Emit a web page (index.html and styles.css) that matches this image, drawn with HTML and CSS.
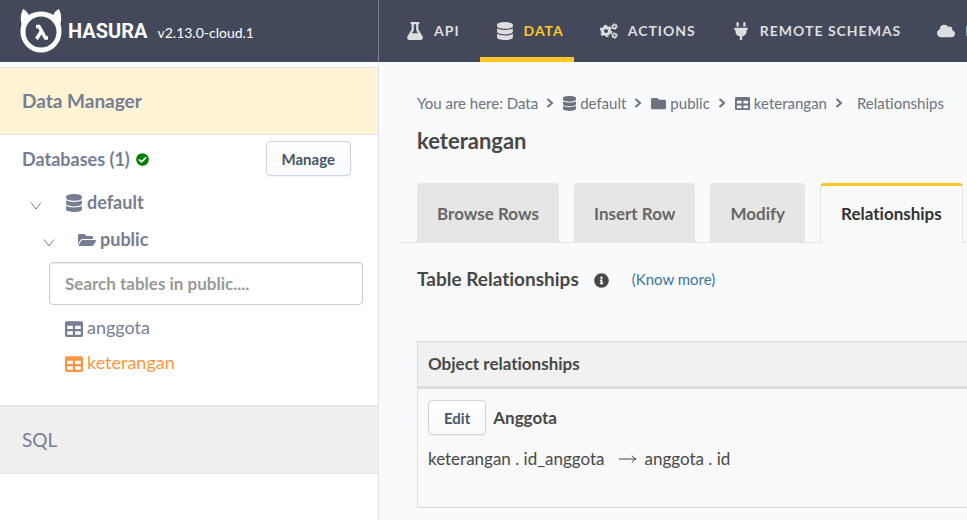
FILE: index.html
```html
<!DOCTYPE html>
<html lang="en">
<head>
<meta charset="utf-8">
<meta name="viewport" content="width=device-width, initial-scale=1">
<title>keterangan - Relationships | Hasura</title>
<link rel="stylesheet" href="styles.css">
</head>
<body>
<svg class="sprite" aria-hidden="true">
  <symbol id="database" viewBox="0 0 448 512"><path d="M448 73.143v45.714C448 159.143 347.667 192 224 192S0 159.143 0 118.857V73.143C0 32.857 100.333 0 224 0s224 32.857 224 73.143zM448 176v102.857C448 319.143 347.667 352 224 352S0 319.143 0 278.857V176c48.125 33.143 136.208 48.572 224 48.572S399.874 209.143 448 176zm0 160v102.857C448 479.143 347.667 512 224 512S0 479.143 0 438.857V336c48.125 33.143 136.208 48.572 224 48.572S399.874 369.143 448 336z"/></symbol>
  <symbol id="table" viewBox="0 0 512 512"><path d="M464 32H48C21.49 32 0 53.49 0 80v352c0 26.51 21.49 48 48 48h416c26.51 0 48-21.49 48-48V80c0-26.51-21.49-48-48-48zM224 416H64v-96h160v96zm0-160H64v-96h160v96zm224 160H288v-96h160v96zm0-160H288v-96h160v96z"/></symbol>
  <symbol id="folder" viewBox="0 0 512 512"><path d="M464 128H272l-64-64H48C21.49 64 0 85.49 0 112v288c0 26.51 21.49 48 48 48h416c26.51 0 48-21.49 48-48V176c0-26.51-21.49-48-48-48z"/></symbol>
  <symbol id="folder-open" viewBox="0 0 576 512"><path d="M572.694 292.093L500.27 416.248A63.997 63.997 0 0 1 444.989 448H45.025c-18.523 0-30.064-20.093-20.731-36.093l72.424-124.155A64 64 0 0 1 152 256h399.964c18.523 0 30.064 20.093 20.73 36.093zM152 224h328v-48c0-26.51-21.49-48-48-48H272l-64-64H48C21.49 64 0 85.49 0 112v278.046l69.077-118.418C86.214 242.25 117.989 224 152 224z"/></symbol>
  <symbol id="chevron" viewBox="0 0 8 10"><path d="M1.500 1L6 5L1.500 9" fill="none" stroke="currentColor" stroke-width="2"/></symbol>
  <symbol id="caret" viewBox="0 0 12 8"><path d="M1 .5L6 7L11 .5" fill="none" stroke="currentColor" stroke-width="1"/></symbol>
</svg>

<header class="topbar">
  <div class="brand">
    <svg class="brand-mark" viewBox="0 0 42 44" role="img" aria-label="Hasura mark">
      <path fill="#fff" fill-rule="evenodd" d="M3 0C6 1.500 8 3.500 8.500 6Q14 2.500 21 2.500T33.500 6C34 3.500 36 1.500 39 0Q42.500 7 40.500 15Q41.500 18 41.500 23A20.500 20.500 0 0 1 .5 23Q.5 18 1.500 15Q-.5 7 3 0ZM21 7.500A15.500 15.500 0 1 0 21 38.500A15.500 15.500 0 1 0 21 7.500Z"/>
      <path fill="none" stroke="#fff" stroke-width="3.400" d="M16 17.500H19L25.500 29H28M21.500 22L16.500 30"/>
    </svg>
    <span class="brand-name">HASURA</span>
    <span class="version">v2.13.0-cloud.1</span>
  </div>
  <nav class="topnav" aria-label="Main">
    <a href="#"><svg class="ico" viewBox="0 0 448 512"><path d="M437.2 403.5L320 215V64h8c13.3 0 24-10.7 24-24V24c0-13.3-10.7-24-24-24H120c-13.3 0-24 10.7-24 24v16c0 13.3 10.7 24 24 24h8v151L10.8 403.5C-18.5 450.6 15.3 512 70.9 512h306.2c55.7 0 89.4-61.5 60.1-108.5zM137.9 320l48.2-77.6c3.7-5.2 5.8-11.6 5.8-18.4V64h64v160c0 6.9 2.2 13.2 5.8 18.4l48.2 77.6h-172z"/></svg>API</a>
    <a href="#" class="active"><svg class="ico"><use href="#database"/></svg>DATA</a>
    <a href="#"><svg class="ico" viewBox="0 0 18 18"><g fill="none" stroke="currentColor"><circle cx="6" cy="9" r="3.500" stroke-width="3"/><circle cx="6" cy="9" r="5.500" stroke-width="1.600" stroke-dasharray="2.900 2.860"/><circle cx="14.500" cy="4.500" r="1.800" stroke-width="1.500"/><circle cx="14.500" cy="4.500" r="2.800" stroke-width="1" stroke-dasharray="1.500 1.430"/><circle cx="14.500" cy="13.500" r="1.800" stroke-width="1.500"/><circle cx="14.500" cy="13.500" r="2.800" stroke-width="1" stroke-dasharray="1.500 1.430"/></g></svg>ACTIONS</a>
    <a href="#"><svg class="ico" viewBox="0 0 384 512"><path d="M320,32a32,32,0,0,0-64,0v96h64Zm48,128H16A16,16,0,0,0,0,176v32a16,16,0,0,0,16,16H32v32A160.07,160.07,0,0,0,160,412.8V512h64V412.8A160.07,160.07,0,0,0,352,256V224h16a16,16,0,0,0,16-16V176A16,16,0,0,0,368,160ZM128,32a32,32,0,0,0-64,0v96h64Z"/></svg>REMOTE SCHEMAS</a>
    <a href="#"><svg class="ico" viewBox="0 0 640 512"><path d="M537.6 226.6c4.1-10.7 6.4-22.4 6.4-34.6 0-53-43-96-96-96-19.7 0-38.1 6-53.3 16.2C367 64.2 315.3 32 256 32c-88.4 0-160 71.6-160 160 0 2.700.1 5.400.2 8.100C40.2 219.8 0 273.2 0 336c0 79.5 64.5 144 144 144h368c70.7 0 128-57.3 128-128 0-61.9-44-113.6-102.4-125.4z"/></svg>EVENTS</a>
  </nav>
</header>

<div class="layout">
  <aside class="sidebar">
    <a href="#" class="side-link current">Data Manager</a>
    <section class="databases">
      <div class="db-head">
        <h2>Databases (1)</h2>
        <svg class="check" viewBox="0 0 512 512"><path d="M504 256c0 136.967-111.033 248-248 248S8 392.967 8 256 119.033 8 256 8s248 111.033 248 248zM227.314 387.314l184-184c6.248-6.248 6.248-16.379 0-22.627l-22.627-22.627c-6.248-6.248-16.379-6.249-22.628 0L216 308.118l-70.059-70.059c-6.248-6.248-16.379-6.248-22.628 0l-22.627 22.627c-6.248 6.248-6.248 16.379 0 22.627l104 104c6.249 6.249 16.379 6.249 22.628.001z"/></svg>
        <button type="button" class="btn manage">Manage</button>
      </div>
      <a href="#" class="node source"><svg class="caret"><use href="#caret"/></svg><svg class="node-ico"><use href="#database"/></svg>default</a>
      <a href="#" class="node schema"><svg class="caret"><use href="#caret"/></svg><svg class="node-ico"><use href="#folder-open"/></svg>public</a>
      <input class="search" type="text" aria-label="Search tables" placeholder="Search tables in public....">
      <ul class="tables">
        <li><a href="#"><svg class="table-ico"><use href="#table"/></svg>anggota</a></li>
        <li><a href="#" class="selected"><svg class="table-ico"><use href="#table"/></svg>keterangan</a></li>
      </ul>
    </section>
    <a href="#" class="side-link sql">SQL</a>
  </aside>

  <main class="content">
    <nav class="crumbs" aria-label="Breadcrumb">
      <span>You are here: <a href="#">Data</a></span>
      <svg class="sep"><use href="#chevron"/></svg>
      <a href="#"><svg class="crumb-ico narrow"><use href="#database"/></svg>default</a>
      <svg class="sep"><use href="#chevron"/></svg>
      <a href="#"><svg class="crumb-ico"><use href="#folder"/></svg>public</a>
      <svg class="sep"><use href="#chevron"/></svg>
      <a href="#"><svg class="crumb-ico"><use href="#table"/></svg>keterangan</a>
      <svg class="sep"><use href="#chevron"/></svg>
      <span class="here">Relationships</span>
    </nav>
    <h1>keterangan</h1>
    <nav class="tabs" aria-label="Table">
      <a href="#">Browse Rows</a>
      <a href="#">Insert Row</a>
      <a href="#">Modify</a>
      <a href="#" class="active">Relationships</a>
    </nav>
    <div class="section-head">
      <h2>Table Relationships</h2>
      <svg class="info" viewBox="0 0 512 512"><path d="M256 8C119.043 8 8 119.083 8 256c0 136.997 111.043 248 248 248s248-111.003 248-248C504 119.083 392.957 8 256 8zm0 110c23.196 0 42 18.804 42 42s-18.804 42-42 42-42-18.804-42-42 18.804-42 42-42zm56 254c0 6.627-5.373 12-12 12h-88c-6.627 0-12-5.373-12-12v-24c0-6.627 5.373-12 12-12h12v-64h-12c-6.627 0-12-5.373-12-12v-24c0-6.627 5.373-12 12-12h64c6.627 0 12 5.373 12 12v100h12c6.627 0 12 5.373 12 12v24z"/></svg>
      <a href="#">(Know more)</a>
    </div>
    <table class="relations">
      <thead><tr><th scope="col">Object relationships</th></tr></thead>
      <tbody><tr><td>
        <div class="relation"><button type="button" class="btn edit">Edit</button><b>Anggota</b></div>
        <div class="mapping">keterangan . id_anggota <svg class="arrow" viewBox="0 0 18 8" role="img" aria-label="to"><path d="M0 4H17M13 .5Q14 3 17 4Q14 5 13 7.500" fill="none" stroke="currentColor"/></svg> anggota . id</div>
      </td></tr></tbody>
    </table>
  </main>
</div>
</body>
</html>
```
FILE: styles.css
```css
* { box-sizing: border-box; }
body {
  margin: 0;
  background: #f9fafc;
  color: #484848;
  font-family: Lato, "Noto Sans", sans-serif;
  font-size: 17px;
  font-variant-ligatures: none;
  line-height: 24px;
  overflow-x: hidden;
}
a { color: inherit; text-decoration: none; }
h1, h2 { margin: 0; }
svg { display: block; flex: none; fill: currentColor; }
.sprite { position: absolute; width: 0; height: 0; }

.topbar {
  display: flex;
  height: 62px;
  background: #43495a;
  color: #fff;
}
.brand {
  display: flex;
  align-items: center;
  flex: 0 0 379px;
  padding: 0 20px;
  border-right: 1px solid #788095;
}
.brand-mark { width: 42px; height: 44px; }
.brand-name {
  margin-left: 6px;
  font: bold 20px/30px Roboto, sans-serif;
}
.version { margin: 4px 0 0 10px; font-size: 14px; }
.topnav { display: flex; flex: 1; min-width: 0; overflow: hidden; padding-left: 11px; }
.topnav a {
  display: flex;
  align-items: center;
  flex: none;
  gap: 10px;
  padding: 4px 10px 0 16px;
  margin-right: 10px;
  border-bottom: 5px solid transparent;
  color: #dedede;
  font-size: 14px;
  font-weight: 700;
  letter-spacing: 1px;
}
.topnav .active { border-color: #ffc627; color: #ffc627; }
.ico { width: 18px; height: 18px; color: #dedede; }

.layout { display: flex; min-height: calc(100vh - 62px); }
.sidebar {
  flex: 0 0 379px;
  padding-top: 5px;
  background: #fff;
  border-right: 1px solid #e5e5e5;
  color: #767e93;
  font-size: 18px;
}
.side-link {
  display: block;
  padding: 21px 22px;
  border: solid #e5e5e5;
  border-width: 1px 0;
  font-size: 19px;
}
.current { background: #fff3d5; font-weight: 700; }
.sql { background: #efefef; border-top-width: 2px; }
.databases { padding: 6px 15px 31px 22px; }
.db-head { display: flex; align-items: center; padding-right: 12px; }
.db-head h2 { font-size: 18px; }
.check { width: 13px; height: 13px; margin: 2px 0 0 6px; color: #008000; }
.btn {
  height: 35px;
  padding: 0 15px;
  border: 1px solid #cbd5e1;
  border-radius: 4px;
  background: linear-gradient(#fff, #f8fafc);
  box-shadow: 0 1px 2px rgba(0, 0, 0, .06);
  color: #475569;
  font: 700 15px/20px Lato, sans-serif;
}
.manage { margin-left: auto; }
.node { display: flex; align-items: center; font-weight: 700; }
.source { padding: 14px 0 0 8px; }
.schema { padding: 13px 0 0 21px; }
.caret { width: 12px; height: 8px; margin-top: 8px; }
.node-ico { width: 18px; height: 18px; margin: 2px 4px 0 23px; }
.search {
  display: block;
  width: calc(100% - 27px);
  height: 43px;
  margin: 11px 0 10px 27px;
  padding: 0 15px;
  border: 1px solid #ccc;
  border-radius: 4px;
  box-shadow: inset 0 1px 1px rgba(0, 0, 0, .075);
  font: 700 17px/24px Lato, sans-serif;
}
.search::placeholder { color: #999; opacity: 1; }
.tables { margin: 0; padding: 0 0 0 43px; list-style: none; }
.tables li + li { margin-top: 11px; }
.tables a { display: flex; align-items: center; gap: 4px; }
.table-ico { width: 18px; height: 18px; margin-top: 3px; }
.selected { color: #fd9540; }

.content { flex: 1; min-width: 0; padding: 29px 0 12px 38px; }
.crumbs {
  display: flex;
  align-items: center;
  color: #6b7280;
  font-size: 15px;
  white-space: nowrap;
}
.crumbs a { display: inline-flex; align-items: center; gap: 4px; }
.crumb-ico { width: 15px; height: 15px; }
.crumb-ico.narrow { width: 13px; }
.sep { width: 8px; height: 10px; margin: 0 9px 0 8px; }
.here { margin-left: 5px; }
h1 { margin-top: 12px; font-size: 22px; line-height: 28px; }
.tabs {
  display: flex;
  gap: 15px;
  margin: 28px 0 0 -19px;
  padding-left: 19px;
  border-bottom: 1px solid #e5e5e5;
}
.tabs a {
  flex: none;
  height: 59px;
  padding: 19px 20px 0;
  border-radius: 4px 4px 0 0;
  background: #e6e6e6;
  color: #666;
  font-weight: 700;
}
.tabs .active {
  height: 60px;
  margin-bottom: -1px;
  padding: 16px 20px 0;
  border: 1px solid #e5e5e5;
  border-top: 3px solid #ffc627;
  border-bottom: 0;
  background: #f9fafc;
  color: #333;
}
.section-head { display: flex; align-items: center; margin-top: 24px; }
.section-head h2 { font-size: 19px; }
.section-head a { margin-left: 23px; color: #3c74a0; font-size: 15px; }
.info { width: 15px; height: 15px; margin: 2px 0 0 15px; }
.relations {
  width: calc(100% + 20px);
  margin-top: 50px;
  border: 1px solid #ddd;
  border-spacing: 0;
  background: #f9f9f9;
}
.relations th {
  padding: 10px;
  border-bottom: 3px solid #ddd;
  background: #f1f1f1;
  text-align: left;
}
.relations td { padding: 11px 10px 36px; }
.relation { display: flex; align-items: center; gap: 7px; }
.mapping { display: flex; align-items: center; margin-top: 12px; white-space: nowrap; }
.arrow { width: 18px; height: 8px; margin: 0 7px 0 15px; }
```
